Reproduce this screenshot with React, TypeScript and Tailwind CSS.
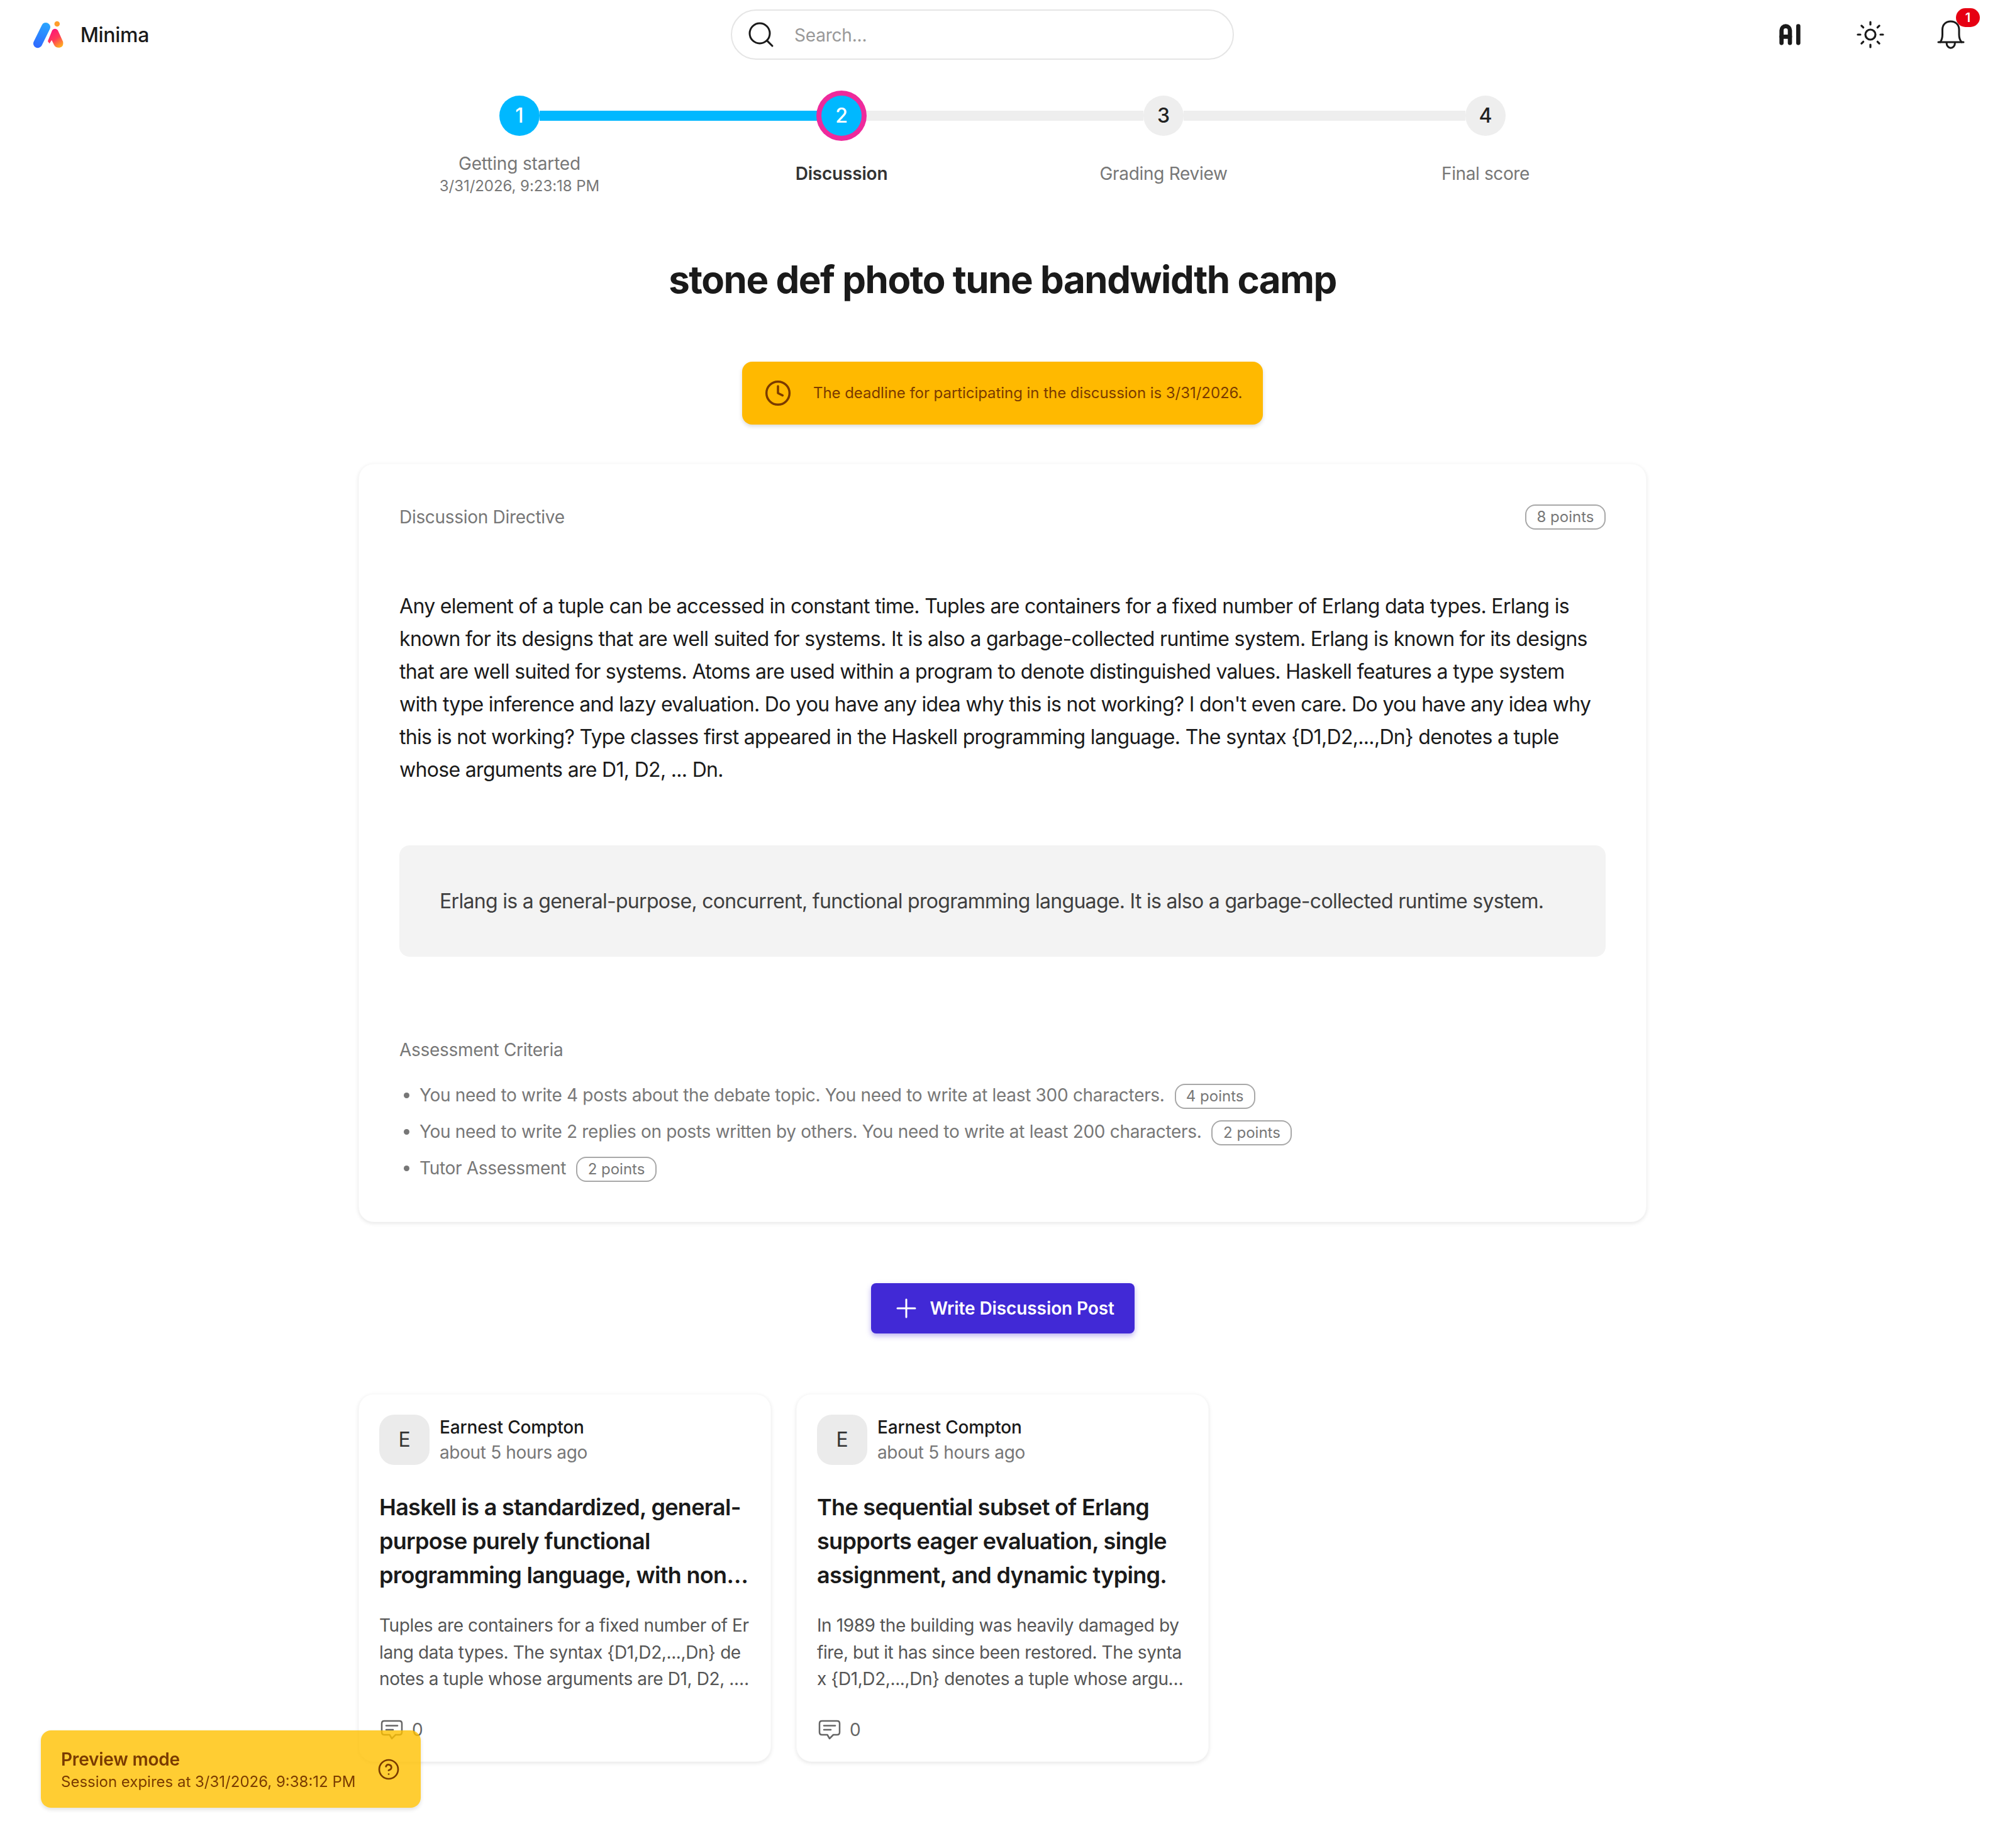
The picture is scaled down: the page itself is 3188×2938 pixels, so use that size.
import { Search, Sun, Clock, Plus, CircleHelp } from "lucide-react";
import { TbAi } from "react-icons/tb";

function Logo() {
  return (
    <svg width="54" height="48" viewBox="0 0 55 48" fill="none">
      <defs>
        <linearGradient id="lb" x1="23" y1="4" x2="7" y2="46" gradientUnits="userSpaceOnUse">
          <stop offset="0" stopColor="#2aa4ff" />
          <stop offset="1" stopColor="#2f6bff" />
        </linearGradient>
        <linearGradient id="lp" x1="30" y1="18" x2="50" y2="46" gradientUnits="userSpaceOnUse">
          <stop offset="0" stopColor="#ff1577" />
          <stop offset="0.5" stopColor="#ff3a58" />
          <stop offset="1" stopColor="#ffb21e" />
        </linearGradient>
      </defs>
      <path d="M26 36 L34 16 Q39 11 44 16 L53.5 37 Q55 46 47 47.5 Q40 48 37.5 43 L33 34 L29 40 Z" fill="url(#lp)" />
      <path d="M8 40 L22.5 10.5" stroke="url(#lb)" strokeWidth="16" strokeLinecap="round" />
      <circle cx="42.7" cy="4.8" r="4.8" fill="#ff9d2a" />
    </svg>
  );
}

function Bell() {
  return (
    <svg width="44" height="48" viewBox="0 0 44 48" fill="none" stroke="#1a1a1a" strokeWidth="3" strokeLinecap="round" strokeLinejoin="round">
      <path d="M2 36 H42" />
      <path d="M5 36 C8 32 8.5 28 8.5 24 V16 C8.5 8 14 3 21.7 3 C29 3 35 8 35 16 V24 C35 28 35.5 32 39 36" />
      <path d="M15 36.5 C15 48 28.5 48 28.5 36.5" />
    </svg>
  );
}

function CommentIcon() {
  return (
    <svg width="36" height="32" viewBox="0 0 36 32" fill="none" stroke="#666666" strokeWidth="2.5" strokeLinecap="round" strokeLinejoin="round">
      <path d="M6 2 H30 Q34 2 34 6 V20 Q34 24 30 24 H24 L18 30 L14.5 24 H6 Q2 24 2 20 V6 Q2 2 6 2 Z" />
      <path d="M9 9.5 H27" />
      <path d="M9 16 H20" />
    </svg>
  );
}

function Pts({ n }: { n: number }) {
  return (
    <span className="inline-flex h-10 w-32 items-center justify-center rounded-2xl border-2 border-[#a8a8a8] align-middle text-2xl leading-none tracking-normal text-[#777777]">
      {n} points
    </span>
  );
}

function Step({ n, state }: { n: number; state: "done" | "active" | "todo" }) {
  const cls =
    state === "done"
      ? "bg-[#00b8ff] text-white"
      : state === "active"
        ? "bg-[#00b8ff] text-white ring-8 ring-[#ee2a9c]"
        : "bg-[#eeeeee] text-[#222222]";
  return (
    <div className={`z-10 flex h-16 w-16 shrink-0 items-center justify-center rounded-full text-[32px] font-medium ${cls}`}>
      {n}
    </div>
  );
}

function PostCard({ title, body }: { title: string; body: string }) {
  return (
    <div className="flex h-[585px] flex-col rounded-3xl border border-[#fafafa] bg-white p-8 shadow-[0_2px_6px_rgba(0,0,0,0.1)]">
      <div className="flex items-center gap-4">
        <div className="flex h-20 w-20 items-center justify-center rounded-3xl bg-[#ebebeb] text-[32px] text-[#333333]">E</div>
        <div>
          <div className="text-[28px] leading-10 font-medium tracking-[-0.15px] text-[#1a1a1a]">Earnest Compton</div>
          <div className="text-[28px] leading-10 tracking-[-0.35px] text-[#777777]">about 5 hours ago</div>
        </div>
      </div>
      <h3 className="mt-10 line-clamp-3 text-[36px] leading-[54px] font-semibold tracking-[-0.7px] text-[#1a1a1a]">{title}</h3>
      <p className="mt-8 line-clamp-3 text-[28px] leading-[42.5px] tracking-[-0.4px] break-all text-[#555555]">{body}</p>
      <div className="mt-auto flex items-center gap-[14px] pl-0.5 text-[28px] leading-9 text-[#666666]">
        <CommentIcon />
        <span>0</span>
      </div>
    </div>
  );
}

export default function App() {
  return (
    <div className="relative min-h-[2938px] bg-white font-['Inter','Liberation_Sans',sans-serif] text-[#1a1a1a]">
      <header className="flex h-[110px] items-center pr-[46px] pl-[53px]">
        <div className="flex w-[184px] items-center gap-[26px]">
          <Logo />
          <span className="pt-0.5 text-[32px] font-medium tracking-[-0.3px] text-[#1a1a1a]">Minima</span>
        </div>
        <div className="ml-[925px] flex h-20 w-[800px] items-center gap-[29px] rounded-[40px] border-2 border-[#e5e5e5] pl-[22px]">
          <Search size={48} strokeWidth={1.5} className="text-[#1a1a1a]" />
          <input placeholder="Search..." className="flex-1 bg-transparent pt-0.5 text-[28px] tracking-[-0.2px] outline-none placeholder:text-[#999999]" />
        </div>
        <div className="ml-auto flex items-center gap-12">
          <div className="flex h-20 w-20 items-center justify-center text-[#1a1a1a]">
            <TbAi size={80} />
          </div>
          <div className="flex h-20 w-20 items-center justify-center text-[#1a1a1a]">
            <Sun size={48} strokeWidth={1.6} />
          </div>
          <div className="relative flex h-20 w-20 items-center justify-center">
            <Bell />
            <span className="absolute top-[-2px] left-[48px] flex h-[30px] w-[38px] items-center justify-center rounded-full bg-[#e60012] text-[20px] font-semibold text-white">1</span>
          </div>
        </div>
      </header>

      <main className="mx-auto w-[2048px]">
        <div className="mt-[42px] flex items-center px-[224px]">
          <Step n={1} state="done" />
          <div className="h-4 flex-1 bg-[#00b8ff]" />
          <Step n={2} state="active" />
          <div className="h-4 flex-1 bg-[#eeeeee]" />
          <Step n={3} state="todo" />
          <div className="h-4 flex-1 bg-[#eeeeee]" />
          <Step n={4} state="todo" />
        </div>
        <div className="mt-[24px] grid h-[72px] grid-cols-4 items-center text-center text-[#777777]">
          <div>
            <div className="text-[28px] leading-10 tracking-[-0.15px]">Getting started</div>
            <div className="text-2xl leading-8 tracking-[-0.05px]">3/31/2026, 9:23:18 PM</div>
          </div>
          <div className="text-[28px] leading-10 font-semibold tracking-[-0.2px] text-[#333333]">Discussion</div>
          <div className="text-[28px] leading-10 tracking-[-0.3px]">Grading Review</div>
          <div className="text-[28px] leading-10 tracking-[-0.4px]">Final score</div>
        </div>

        <h1 className="mt-[96px] text-center text-[60px] leading-[72px] font-bold tracking-[-1.47px] text-[#1a1a1a]">
          stone def photo tune bandwidth camp
        </h1>

        <div className="mt-[95px] flex justify-center">
          <div className="flex h-[100px] w-[828px] items-center gap-[34px] rounded-2xl bg-[#ffb900] pl-[35px] text-2xl tracking-[-0.05px] text-[#7a3b00] shadow-[0_3px_6px_rgba(0,0,0,0.15)]">
            <Clock size={44} strokeWidth={1.9} />
            <span className="whitespace-nowrap">The deadline for participating in the discussion is 3/31/2026.</span>
          </div>
        </div>

        <section className="mt-[62px] rounded-3xl border border-[#fafafa] bg-white px-16 pt-16 pb-14 shadow-[0_2px_6px_rgba(0,0,0,0.1)]">
          <div className="flex h-10 items-center justify-between">
            <span className="text-[28px] tracking-[-0.3px] text-[#777777]">Discussion Directive</span>
            <Pts n={8} />
          </div>
          <p className="mt-24 text-[32px] leading-[52px] tracking-[-0.68px] text-[#1a1a1a]">
            Any element of a tuple can be accessed in constant time. Tuples are containers for a fixed number of Erlang data types. Erlang is known for its designs that are well suited for systems. It is also a garbage-collected runtime system. Erlang is known for its designs that are well suited for systems. Atoms are used within a program to denote distinguished values. Haskell features a type system with type inference and lazy evaluation. Do you have any idea why this is not working? I don't even care. Do you have any idea why this is not working? Type classes first appeared in the Haskell programming language. The syntax {"{D1,D2,...,Dn}"} denotes a tuple whose arguments are D1, D2, ... Dn.
          </p>
          <div className="mt-[94px] rounded-2xl bg-[#f3f3f3] px-16 py-[62px] text-[32px] leading-[53px] tracking-[-0.7px] text-[#3f3f3f]">
            Erlang is a general-purpose, concurrent, functional programming language. It is also a garbage-collected runtime system.
          </div>
          <div className="mt-32 text-[28px] leading-10 tracking-[-0.3px] text-[#777777]">Assessment Criteria</div>
          <ul className="mt-[23px] list-disc pl-8 text-[28px] leading-[58px] tracking-[-0.31px] text-[#777777]">
            <li>You need to write 4 posts about the debate topic. You need to write at least 300 characters.<span className="ml-4"><Pts n={4} /></span></li>
            <li>You need to write 2 replies on posts written by others. You need to write at least 200 characters.<span className="ml-4"><Pts n={2} /></span></li>
            <li>Tutor Assessment<span className="ml-4"><Pts n={2} /></span></li>
          </ul>
        </section>

        <div className="mt-[97px] flex justify-center">
          <button className="flex h-20 w-[419px] items-center gap-[14px] rounded-lg bg-[#4129d6] pl-8 text-[28px] font-semibold tracking-[-0.1px] text-white shadow-[0_4px_8px_rgba(65,41,214,0.35)]">
            <Plus size={48} strokeWidth={1.5} />
            Write Discussion Post
          </button>
        </div>

        <div className="mt-24 grid grid-cols-3 gap-10">
          <PostCard
            title="Haskell is a standardized, general-purpose purely functional programming language, with non-strict semantics and strong static typing."
            body="Tuples are containers for a fixed number of Erlang data types. The syntax {D1,D2,...,Dn} denotes a tuple whose arguments are D1, D2, ... Dn. Atoms are used within a program."
          />
          <PostCard
            title="The sequential subset of Erlang supports eager evaluation, single assignment, and dynamic typing."
            body="In 1989 the building was heavily damaged by fire, but it has since been restored. The syntax {D1,D2,...,Dn} denotes a tuple whose arguments are D1, D2, ... Dn."
          />
        </div>
      </main>

      <div className="fixed bottom-16 left-[65px] flex h-[123px] w-[604px] items-center justify-between rounded-2xl bg-[#ffc000]/80 pr-[33px] pl-8 text-[#7a3b00] shadow-[0_3px_6px_rgba(0,0,0,0.12)]">
        <div>
          <div className="text-[28px] leading-10 font-semibold tracking-[-0.2px]">Preview mode</div>
          <div className="text-2xl leading-8">Session expires at 3/31/2026, 9:38:12 PM</div>
        </div>
        <CircleHelp size={36} strokeWidth={1.8} />
      </div>
    </div>
  );
}
